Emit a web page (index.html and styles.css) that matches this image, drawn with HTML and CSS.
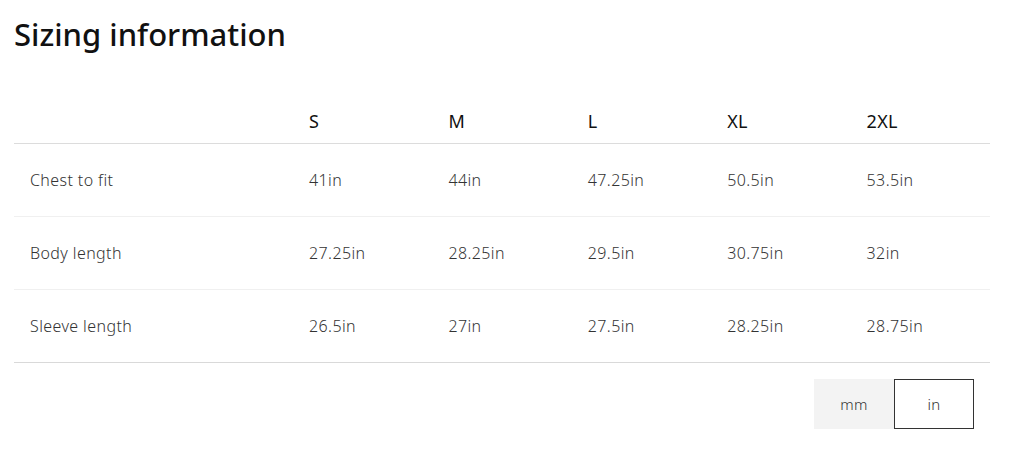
FILE: index.html
```html
<!DOCTYPE html>
<html lang="en">
<head>
<meta charset="utf-8">
<title>Sizing information</title>
<link rel="stylesheet" href="styles.css">
</head>
<body>
<div class="page">
  <h1 class="title">Sizing information</h1>
  <table class="sizes">
    <colgroup>
      <col class="col-label"><col><col><col><col><col>
    </colgroup>
    <thead>
      <tr><th></th><th>S</th><th>M</th><th>L</th><th>XL</th><th>2XL</th></tr>
    </thead>
    <tbody>
      <tr><td>Chest to fit</td><td>41in</td><td>44in</td><td>47.25in</td><td>50.5in</td><td>53.5in</td></tr>
      <tr><td>Body length</td><td>27.25in</td><td>28.25in</td><td>29.5in</td><td>30.75in</td><td>32in</td></tr>
      <tr><td>Sleeve length</td><td>26.5in</td><td>27in</td><td>27.5in</td><td>28.25in</td><td>28.75in</td></tr>
    </tbody>
  </table>
  <div class="units">
    <button class="unit">mm</button>
    <button class="unit active">in</button>
  </div>
</div>
</body>
</html>
```
FILE: styles.css
```css
html, body { margin: 0; padding: 0; background: #fff; }
body { font-family: "Noto Sans", Lato, sans-serif; color: #222; }
.page { width: 976px; padding: 14px 0 0 14px; }
.title { margin: 0; font-size: 31px; line-height: 40px; font-weight: 500; color: #111; }
.sizes { width: 976px; border-collapse: collapse; table-layout: fixed; margin-top: 48px; }
.col-label { width: 279px; }
.sizes th { text-align: left; font-weight: 400; font-size: 18px; color: #111; padding: 0 16px 4px; height: 37px; vertical-align: middle; border-bottom: 1px solid #dcdcdc; letter-spacing: 0.3px; }
.sizes td { font-size: 16px; font-weight: 300; color: #333; padding: 0 16px; height: 72px; border-bottom: 1px solid #f0f0f0; letter-spacing: 0.4px; }
.sizes tbody tr:last-child td { border-bottom: 1px solid #d9d9d9; }
.units { display: flex; justify-content: flex-end; padding-right: 16px; margin-top: 16px; }
.unit { width: 80px; height: 50px; font-family: inherit; font-size: 15px; font-weight: 300; color: #333; background: #f3f3f3; border: 1px solid #f3f3f3; margin: 0; padding: 0; letter-spacing: 0.3px; }
.unit.active { background: #fff; border: 1px solid #333; }
```
